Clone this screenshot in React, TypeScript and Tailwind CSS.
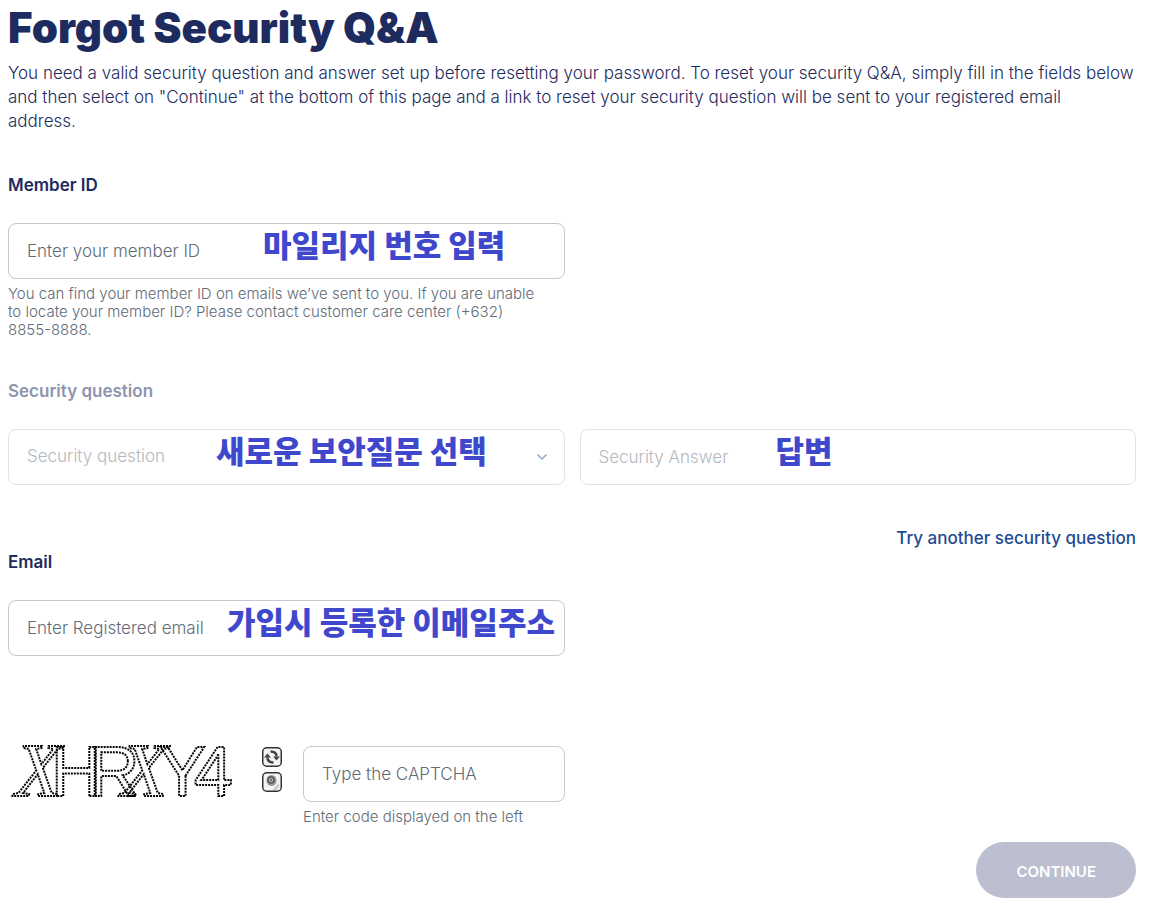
import { useState } from "react";
import type { ChangeEvent, FormEvent, ReactNode } from "react";

interface IFormInput {
  id: string;
  label?: string;
  type?: string;
  placeholder: string;
  value: string;
  disabled?: boolean;
  onChange: (e: ChangeEvent<HTMLInputElement>) => void;
}

function FormInput({ id, label, type = "text", placeholder, value, disabled, onChange }: IFormInput) {
  return (
    <input
      id={id}
      aria-label={label}
      type={type}
      placeholder={placeholder}
      value={value}
      disabled={disabled}
      onChange={onChange}
      className="block h-14 w-full rounded-lg border border-[#c1c9d2] bg-white px-[18px] text-[17px] font-light text-[#1e2b5e] placeholder:text-[#5f6b78] disabled:border-[#e0e3e8] disabled:placeholder:text-[#b4b8be]"
    />
  );
}

function Note({ position, children }: { position: string; children: ReactNode }) {
  return (
    <span
      className={`pointer-events-none absolute top-0 whitespace-nowrap font-['Noto_Sans_CJK_KR',sans-serif] text-[31px] leading-[42px] font-black text-[#3f48cc] ${position}`}
    >
      {children}
    </span>
  );
}

function Captcha() {
  return (
    <svg
      viewBox="0 0 224 56"
      role="img"
      aria-label="CAPTCHA"
      className="h-14 w-56 shrink-0 overflow-visible"
      fill="white"
      fillOpacity="0"
      stroke="#000"
      strokeWidth="2"
      strokeDasharray="2 1"
      fontFamily="'Liberation Sans', sans-serif"
      fontSize="70"
    >
      <text y="50">
        <tspan x="7" fontFamily="'Liberation Serif', serif" fontStyle="italic" fontSize="76">X</tspan>
        <tspan x="43">H</tspan>
        <tspan x="81">R</tspan>
        <tspan x="113" fontFamily="'Liberation Serif', serif" fontStyle="italic" fontSize="76">X</tspan>
        <tspan x="151">Y</tspan>
        <tspan x="186">4</tspan>
      </text>
    </svg>
  );
}

function RefreshIcon() {
  return (
    <svg viewBox="0 0 20 20" className="size-5" fill="none">
      <rect x="0.75" y="0.75" width="18.5" height="18.5" rx="4" fill="#f4f4f4" stroke="#333" strokeWidth="1.5" />
      <path d="M8.5 4.5c4 0 6 1.5 6 5M11.5 15.5c-4 0-6-1.5-6-5" stroke="#444" strokeWidth="2.5" />
      <path d="M2 10.5h7L5.5 6.5zM11 9.5h7l-3.500 4z" fill="#444" />
    </svg>
  );
}

function SoundIcon() {
  return (
    <svg viewBox="0 0 20 20" className="size-5" fill="none">
      <rect x="0.75" y="0.75" width="18.5" height="18.5" rx="4" fill="#f4f4f4" stroke="#333" strokeWidth="1.5" />
      <path d="M11 17l6-6v4l-3 3h-3z" fill="#ccc" />
      <ellipse cx="9.5" cy="8.5" rx="5" ry="5.5" fill="#999" />
      <circle cx="9" cy="8" r="3" fill="#b5b5b5" stroke="#555" strokeWidth="1.5" />
      <circle cx="9" cy="8" r="1" fill="#555" />
    </svg>
  );
}

export default function App() {
  const [memberId, setMemberId] = useState<string>("");
  const [question, setQuestion] = useState<string>("");
  const [answer, setAnswer] = useState<string>("");
  const [email, setEmail] = useState<string>("");
  const [captcha, setCaptcha] = useState<string>("");

  const submitHandler = (e: FormEvent) => {
    e.preventDefault();
  };

  return (
    <main className="bg-white pr-[29px] pb-6 pl-2 font-[Inter,sans-serif] text-[17px] text-[#1e2b5e]">
      <h1 className="pt-1 text-[42px] leading-[48px] font-black">Forgot Security Q&amp;A</h1>
      <p className="mt-[9px] leading-6 font-light">
        You need a valid security question and answer set up before resetting your password. To reset your
        security Q&amp;A, simply fill in the fields below and then select on "Continue" at the bottom of this page
        and a link to reset your security question will be sent to your registered email
        <br />
        address.
      </p>

      <form onSubmit={submitHandler}>
        <div className="mt-10 grid grid-cols-2 gap-x-[15px]">
          <div>
            <label htmlFor="member-id" className="block leading-6 font-semibold">
              Member ID
            </label>
            <div className="relative mt-[26px]">
              <FormInput
                id="member-id"
                placeholder="Enter your member ID"
                value={memberId}
                onChange={(e) => setMemberId(e.target.value)}
              />
              <Note position="left-[255px]">마일리지 번호 입력</Note>
            </div>
            <p className="mt-1.5 pr-6 text-[15px] leading-[18px] font-light text-[#5f6b78]">
              You can find your member ID on emails we’ve sent to you. If you are unable to locate your member
              ID? Please contact customer care center (+632){" "}
              <span className="whitespace-nowrap">8855-8888.</span>
            </p>
          </div>
        </div>

        <label htmlFor="question" className="mt-10 block leading-6 font-semibold text-[#8e95ae]">
          Security question
        </label>
        <div className="mt-[26px] grid grid-cols-2 gap-x-[15px]">
          <div className="relative">
            <select
              id="question"
              value={question}
              disabled
              onChange={(e) => setQuestion(e.target.value)}
              className="block h-14 w-full appearance-none rounded-lg border border-[#e0e3e8] bg-white px-[18px] font-light text-[#b4b8be] opacity-100"
            >
              <option value="">Security question</option>
            </select>
            <svg
              viewBox="0 0 12 8"
              className="pointer-events-none absolute top-6 right-[17px] h-2 w-3"
              fill="none"
              stroke="#8fa8cc"
              strokeWidth="1.5"
            >
              <path d="M1.5 1.5L6 6l4.5-4.5" />
            </svg>
            <Note position="left-[208px]">새로운 보안질문 선택</Note>
          </div>
          <div className="relative">
            <FormInput
              id="answer"
              label="Security Answer"
              placeholder="Security Answer"
              value={answer}
              disabled
              onChange={(e) => setAnswer(e.target.value)}
            />
            <Note position="left-[196px]">답변</Note>
          </div>
        </div>
        <div className="mt-[41px] flex justify-end">
          <a href="#question" className="leading-6 font-medium text-[#234b93]">
            Try another security question
          </a>
        </div>

        <div className="grid grid-cols-2 gap-x-[15px]">
          <div>
            <label htmlFor="email" className="block leading-6 font-semibold">
              Email
            </label>
            <div className="relative mt-[26px]">
              <FormInput
                id="email"
                type="email"
                placeholder="Enter Registered email"
                value={email}
                onChange={(e) => setEmail(e.target.value)}
              />
              <Note position="left-[219px]">가입시 등록한 이메일주소</Note>
            </div>
            <div className="mt-[90px] flex items-start">
              <Captcha />
              <div className="mx-[21px] flex shrink-0 flex-col gap-[5px] pt-px pl-[9px]">
                <button type="button" aria-label="Refresh CAPTCHA">
                  <RefreshIcon />
                </button>
                <button type="button" aria-label="Play CAPTCHA">
                  <SoundIcon />
                </button>
              </div>
              <div className="grow">
                <FormInput
                  id="captcha"
                  label="Type the CAPTCHA"
                  placeholder="Type the CAPTCHA"
                  value={captcha}
                  onChange={(e) => setCaptcha(e.target.value)}
                />
                <p className="mt-1.5 text-[15px] leading-[18px] font-light text-[#5f6b78]">
                  Enter code displayed on the left
                </p>
              </div>
            </div>
          </div>
        </div>

        <div className="mt-4 flex justify-end">
          <button
            type="submit"
            disabled
            className="h-14 rounded-full bg-[#bbbfcf] px-10 pt-1 text-[15px] font-semibold text-white"
          >
            CONTINUE
          </button>
        </div>
      </form>
    </main>
  );
}
